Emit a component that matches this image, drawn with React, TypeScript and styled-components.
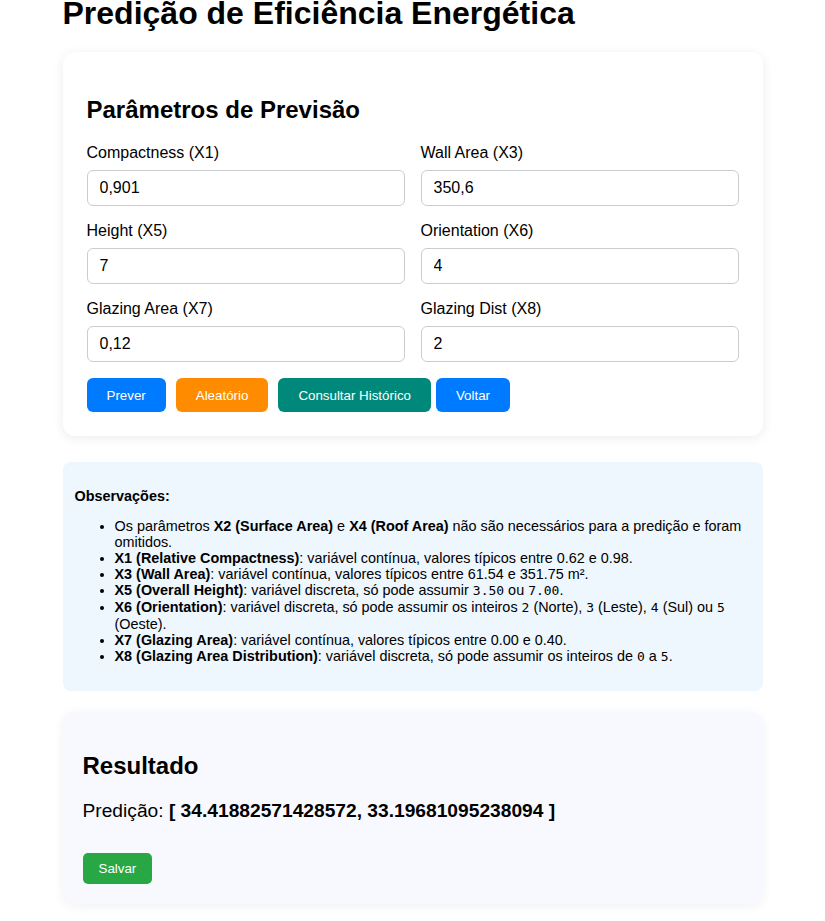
import styled, { createGlobalStyle } from 'styled-components'

const GlobalStyle = createGlobalStyle`
  body {
    margin: 0;
    background: #ffffff;
    font-family: "Liberation Sans", Arial, sans-serif;
    color: #000;
  }
`

interface ButtonProps {
  $bg: string;
  $gap?: number;
}

const Page = styled.div`
  max-width: 700px;
  margin: 0 auto;
  padding-bottom: 16px;
`

const Title = styled.h1`
  font-size: 32px;
  line-height: 26px;
  font-weight: bold;
  margin: 0 0 26px;
`

const Card = styled.section`
  background: #ffffff;
  border-radius: 12px;
  box-shadow: 0 2px 12px rgba(0, 0, 0, 0.08);
  padding: 24px;
`

const CardTitle = styled.h2`
  font-size: 24px;
  font-weight: bold;
  margin: 20px 0;
`

const FieldGrid = styled.div`
  display: grid;
  grid-template-columns: 1fr 1fr;
  gap: 16px;
`

const Field = styled.label`
  display: flex;
  flex-direction: column;
  gap: 8px;
  font-size: 16px;
`

const Input = styled.input`
  box-sizing: border-box;
  height: 36px;
  padding: 0 12px;
  border: 1px solid #cccccc;
  border-radius: 6px;
  font-family: "Liberation Sans", Arial, sans-serif;
  font-size: 16px;
  color: #000;
  outline: none;
`

const ButtonRow = styled.div`
  display: flex;
  margin-top: 16px;
`

const Button = styled.button<ButtonProps>`
  height: 34px;
  padding: 0 20px;
  margin-right: ${(p) => (p.$gap ?? 10)}px;
  border: none;
  border-radius: 6px;
  background: ${(p) => p.$bg};
  color: #ffffff;
  font-family: "Liberation Sans", Arial, sans-serif;
  font-size: 13.333px;
  cursor: pointer;
`

const Notes = styled.div`
  margin-top: 26px;
  background: #eef6fe;
  border-radius: 8px;
  padding: 12px;
  font-size: 14.4px;
`

const NotesTitle = styled.p`
  font-weight: bold;
  margin: 14px 0;
`

const NotesList = styled.ul`
  margin: 14px 0;
  padding-left: 40px;
  line-height: 16px;
`

const Code = styled.code`
  font-family: "DejaVu Sans Mono", monospace;
  font-size: 13px;
`

const ResultCard = styled.section`
  margin-top: 21px;
  background: #f8f9fe;
  border-radius: 12px;
  box-shadow: 0 2px 12px rgba(0, 0, 0, 0.06);
  padding: 20px;
`

const ResultText = styled.p`
  font-size: 19.2px;
  margin: 19px 0 31px;
`

const SaveButton = styled.button`
  height: 31px;
  padding: 0 16px;
  border: none;
  border-radius: 5px;
  background: #28a745;
  color: #ffffff;
  font-family: "Liberation Sans", Arial, sans-serif;
  font-size: 13.333px;
`

const fields = [
  { label: 'Compactness (X1)', value: '0,901' },
  { label: 'Wall Area (X3)', value: '350,6' },
  { label: 'Height (X5)', value: '7' },
  { label: 'Orientation (X6)', value: '4' },
  { label: 'Glazing Area (X7)', value: '0,12' },
  { label: 'Glazing Dist (X8)', value: '2' },
]

export default function App() {
  return (
    <>
      <GlobalStyle />
      <Page>
        <Title>Predição de Eficiência Energética</Title>

        <Card>
          <CardTitle>Parâmetros de Previsão</CardTitle>
          <FieldGrid>
            {fields.map((f) => (
              <Field key={f.label}>
                {f.label}
                <Input defaultValue={f.value} />
              </Field>
            ))}
          </FieldGrid>
          <ButtonRow>
            <Button $bg="#007bff">Prever</Button>
            <Button $bg="#ff8c00">Aleatório</Button>
            <Button $bg="#00897b" $gap={5}>Consultar Histórico</Button>
            <Button $bg="#007bff">Voltar</Button>
          </ButtonRow>
        </Card>

        <Notes>
          <NotesTitle>Observações:</NotesTitle>
          <NotesList>
            <li>
              Os parâmetros <strong>X2 (Surface Area)</strong> e <strong>X4 (Roof Area)</strong> não são
              necessários para a predição e foram omitidos.
            </li>
            <li>
              <strong>X1 (Relative Compactness)</strong>: variável contínua, valores típicos entre 0.62 e 0.98.
            </li>
            <li>
              <strong>X3 (Wall Area)</strong>: variável contínua, valores típicos entre 61.54 e 351.75 m².
            </li>
            <li>
              <strong>X5 (Overall Height)</strong>: variável discreta, só pode assumir <Code>3.50</Code> ou{' '}
              <Code>7.00</Code>.
            </li>
            <li>
              <strong>X6 (Orientation)</strong>: variável discreta, só pode assumir os inteiros <Code>2</Code>{' '}
              (Norte), <Code>3</Code> (Leste), <Code>4</Code> (Sul) ou <Code>5</Code> (Oeste).
            </li>
            <li>
              <strong>X7 (Glazing Area)</strong>: variável contínua, valores típicos entre 0.00 e 0.40.
            </li>
            <li>
              <strong>X8 (Glazing Area Distribution)</strong>: variável discreta, só pode assumir os inteiros de{' '}
              <Code>0</Code> a <Code>5</Code>.
            </li>
          </NotesList>
        </Notes>

        <ResultCard>
          <CardTitle>Resultado</CardTitle>
          <ResultText>
            Predição: <strong>[ 34.41882571428572, 33.19681095238094 ]</strong>
          </ResultText>
          <SaveButton>Salvar</SaveButton>
        </ResultCard>
      </Page>
    </>
  )
}
